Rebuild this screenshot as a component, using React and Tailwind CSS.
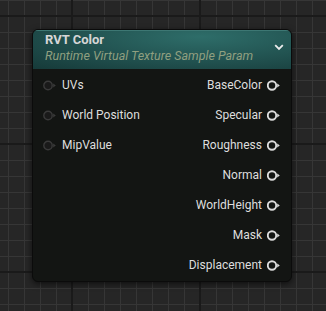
/**
 * Material graph node: RVT Color
 */

const INPUTS = ['UVs', 'World Position', 'MipValue'];
const OUTPUTS = ['BaseColor', 'Specular', 'Roughness', 'Normal', 'WorldHeight', 'Mask', 'Displacement'];

function Pin({ output = false }) {
  const c = output ? '#dcdcdc' : '#3a3a3a';
  return (
    <svg width="14" height="11" viewBox="0 0 14 11" className="shrink-0">
      <circle cx="5" cy="5.5" r="4.2" fill={output ? 'none' : '#1a1a1a'} stroke={c} strokeWidth={output ? 1.9 : 1.4} />
      <polygon points="10.2,3.5 12.8,5.5 10.2,7.5" fill={c} />
    </svg>
  );
}

export default function App() {
  return (
    <div
      className="w-[326px] h-[311px] overflow-hidden bg-[#262626] pt-[29px] pl-[32px] font-['Roboto',sans-serif]
        bg-[image:linear-gradient(90deg,#1a1a1a_2px,transparent_2px),linear-gradient(180deg,#1a1a1a_2px,transparent_2px),linear-gradient(90deg,#363636_1px,transparent_1px),linear-gradient(180deg,#363636_1px,transparent_1px)]
        bg-[size:128px_128px,128px_128px,16px_16px,16px_16px]
        bg-[position:71px_0,0_15px,8px_0,0_0]"
    >
      <div className="w-[260px] h-[253px] rounded-[6px] border border-[#0b0b0b] bg-[#131513] shadow-[0_2px_6px_rgba(0,0,0,0.6)] overflow-hidden flex flex-col">
        <div className="h-[39px] shrink-0 relative bg-[radial-gradient(ellipse_at_65%_15%,#2e6d69_0%,#21514f_55%,#163a39_100%)] border-t border-[#3d7773] pl-[12px] pt-[1px]">
          <div className="text-[13px] leading-[16px] font-bold text-[#d6d6d6]">RVT Color</div>
          <div className="text-[12.5px] leading-[16px] italic text-[#8f9f80]">Runtime Virtual Texture Sample Param</div>
          <svg width="10" height="7" viewBox="0 0 10 7" className="absolute right-[7px] top-[13px]">
            <path d="M1.2 1.2 L5 5 L8.8 1.2" fill="none" stroke="#ececec" strokeWidth="1.8" />
          </svg>
        </div>
        <div className="flex justify-between pt-[1px]">
          <div className="flex flex-col pl-[10px]">
            {INPUTS.map((name) => (
              <div key={name} className="h-[30px] flex items-center gap-[5px]">
                <Pin />
                <span className="text-[12px] text-[#dedede]">{name}</span>
              </div>
            ))}
          </div>
          <div className="flex flex-col items-end pr-[10px]">
            {OUTPUTS.map((name) => (
              <div key={name} className="h-[30px] flex items-center gap-[5px]">
                <span className="text-[12px] text-[#dedede]">{name}</span>
                <Pin output />
              </div>
            ))}
          </div>
        </div>
      </div>
    </div>
  );
}
